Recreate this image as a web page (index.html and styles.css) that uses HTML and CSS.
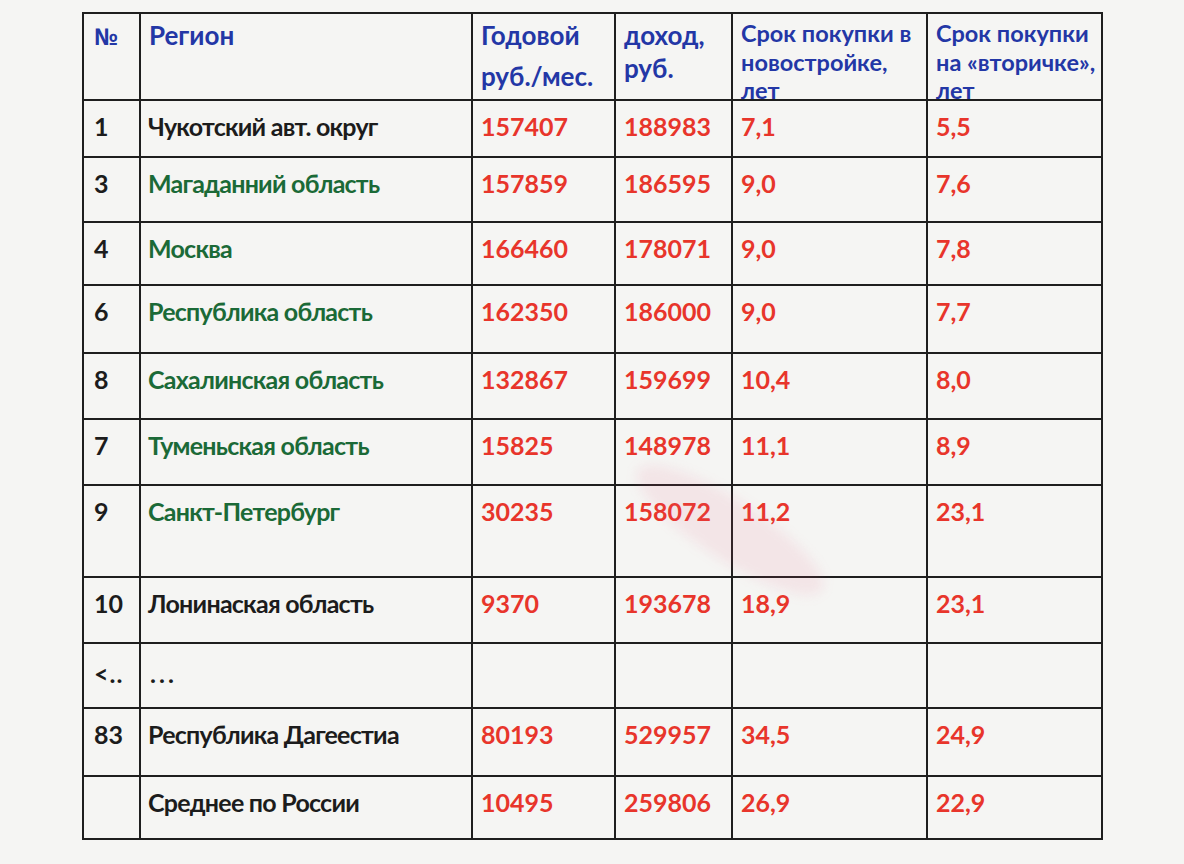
FILE: index.html
```html
<!DOCTYPE html>
<html lang="ru">
<head>
<meta charset="utf-8">
<title>Срок покупки жилья по регионам</title>
<link rel="stylesheet" href="styles.css">
</head>
<body>
<div class="page">
  <table class="grid">
    <colgroup>
      <col class="c-num"><col class="c-reg"><col class="c-inc"><col class="c-dox"><col class="c-new"><col class="c-sec">
    </colgroup>
    <thead>
      <tr class="head">
        <th><div class="hcell h1 numsign">№</div></th>
        <th><div class="hcell h1">Регион</div></th>
        <th><div class="hcell h1">Годовой<br>руб./мес.</div></th>
        <th><div class="hcell h2">доход,<br>руб.</div></th>
        <th><div class="hcell h3">Срок покупки в<br>новостройке,<br>лет</div></th>
        <th><div class="hcell h3">Срок покупки<br>на «вторичке»,<br>лет</div></th>
      </tr>
    </thead>
    <tbody>
      <tr class="r57"><td>1</td><td class="reg">Чукотский авт. округ</td><td class="red">157407</td><td class="red">188983</td><td class="red">7,1</td><td class="red">5,5</td></tr>
      <tr class="r65"><td>3</td><td class="reg green">Магаданний область</td><td class="red">157859</td><td class="red">186595</td><td class="red">9,0</td><td class="red">7,6</td></tr>
      <tr class="r63"><td>4</td><td class="reg green">Москва</td><td class="red">166460</td><td class="red">178071</td><td class="red">9,0</td><td class="red">7,8</td></tr>
      <tr class="r68"><td>6</td><td class="reg green">Республика область</td><td class="red">162350</td><td class="red">186000</td><td class="red">9,0</td><td class="red">7,7</td></tr>
      <tr class="r66"><td>8</td><td class="reg green">Сахалинская область</td><td class="red">132867</td><td class="red">159699</td><td class="red">10,4</td><td class="red">8,0</td></tr>
      <tr class="r66"><td>7</td><td class="reg green">Туменьская область</td><td class="red">15825</td><td class="red">148978</td><td class="red">11,1</td><td class="red">8,9</td></tr>
      <tr class="r92"><td>9</td><td class="reg green">Санкт-Петербург</td><td class="red">30235</td><td class="red">158072</td><td class="red">11,2</td><td class="red">23,1</td></tr>
      <tr class="r66"><td>10</td><td class="reg">Лонинаская область</td><td class="red">9370</td><td class="red">193678</td><td class="red">18,9</td><td class="red">23,1</td></tr>
      <tr class="r65"><td class="dots">&lt;..</td><td class="reg dots">...</td><td></td><td></td><td></td><td></td></tr>
      <tr class="r68"><td>83</td><td class="reg">Республика Дагеестиа</td><td class="red">80193</td><td class="red">529957</td><td class="red">34,5</td><td class="red">24,9</td></tr>
      <tr class="r63"><td></td><td class="reg">Среднее по России</td><td class="red">10495</td><td class="red">259806</td><td class="red">26,9</td><td class="red">22,9</td></tr>
    </tbody>
  </table>
  <div class="stain" aria-hidden="true"></div>
</div>
</body>
</html>
```
FILE: styles.css
```css
html, body {
  margin: 0;
  padding: 0;
  background: #f5f5f3;
}
body {
  font-family: Lato, "Open Sans", "DejaVu Sans", sans-serif;
  font-weight: 700;
  color: #1c1c1c;
}
.page {
  position: relative;
  width: 1184px;
  height: 864px;
  padding: 12px 0 0 82px;
  box-sizing: border-box;
  overflow: hidden;
}
.grid {
  border-collapse: collapse;
  table-layout: fixed;
  width: 1019px;
}
.grid td, .grid th {
  border: 2.5px solid #1e1e1e;
  padding: 0;
  vertical-align: top;
  text-align: left;
}
.c-num { width: 57px; }
.c-reg { width: 332px; }
.c-inc { width: 143px; }
.c-dox { width: 117px; }
.c-new { width: 195px; }
.c-sec { width: 175px; }

.head { height: 87px; }
.hcell {
  box-sizing: border-box;
  height: 84px;
  overflow: visible;
  color: #2337a6;
  font-weight: 700;
  font-size: 26px;
  padding-left: 8px;
  white-space: nowrap;
}
.grid th:first-child .hcell { padding-left: 10px; }
.hcell.numsign {
  font-family: "Open Sans", "Noto Sans", sans-serif;
  font-size: 23px;
  padding-top: 2px;
}
.h1 { line-height: 41px; padding-top: 1px; }
.h2 { line-height: 33px; padding-top: 5px; }
.h3 { line-height: 28.5px; padding-top: 5px; font-size: 23.5px; }

.grid tbody td {
  font-size: 25px;
  line-height: 30px;
  padding: 10px 0 0 8px;
  white-space: nowrap;
}
.grid tbody td:first-child { padding-left: 10px; }
.grid tbody td.reg { letter-spacing: -0.75px; padding-left: 7px; }
.red { color: #e8352b; }
.green { color: #1b6a37; }
.grid tbody td.dots { letter-spacing: 1px; padding-top: 14px; }
.grid tbody td.reg.dots { letter-spacing: 3px; padding-left: 9px; }

.r57 { height: 57px; }
.r63 { height: 63px; }
.r65 { height: 65px; }
.r66 { height: 66px; }
.r68 { height: 68px; }
.r92 { height: 92px; }

.stain {
  position: absolute;
  left: 620px;
  top: 500px;
  width: 220px;
  height: 60px;
  border-radius: 50%;
  background: rgba(230, 90, 130, 0.10);
  transform: rotate(33deg);
  filter: blur(6px);
  pointer-events: none;
}
```
